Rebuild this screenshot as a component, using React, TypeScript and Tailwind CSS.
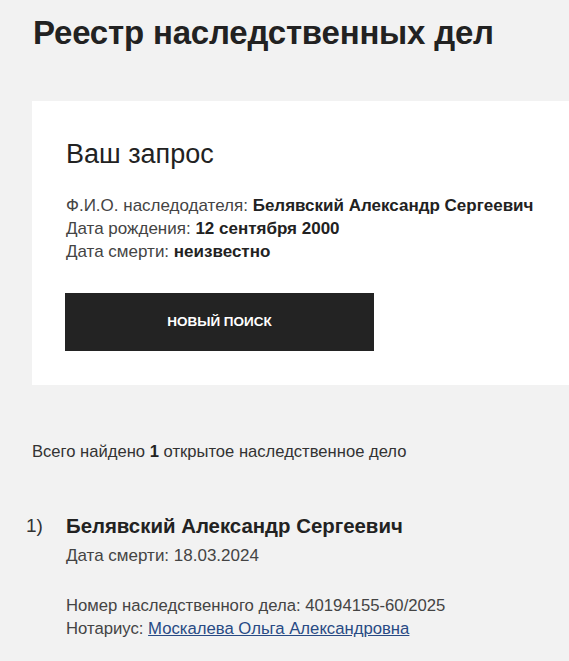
const App = () => {
    return (
        <div className="min-h-screen bg-[#f2f2f2] text-[#222] font-['Liberation_Sans',Arial,sans-serif] pb-6">
            <h1 className="pl-[33px] pt-[14px] text-[33px] leading-[38px] font-bold tracking-[-0.2px]">
                Реестр наследственных дел
            </h1>

            {/* Request card */}
            <div className="ml-8 mt-[49px] bg-white pl-[34px] pt-[38px] pb-[34px]">
                <h2 className="text-[27px] leading-[30px] font-normal">Ваш запрос</h2>
                <div className="mt-[25px] text-[17px] leading-[23px] text-[#444]">
                    <p>
                        Ф.И.О. наследодателя: <b className="text-[#222]">Белявский Александр Сергеевич</b>
                    </p>
                    <p>
                        Дата рождения: <b className="text-[#222]">12 сентября 2000</b>
                    </p>
                    <p>
                        Дата смерти: <b className="text-[#222]">неизвестно</b>
                    </p>
                </div>
                <button
                    type="button"
                    className="mt-[30px] w-[309px] h-[58px] -ml-px bg-[#232323] text-white text-[13.5px] font-bold uppercase"
                >
                    Новый поиск
                </button>
            </div>

            <p className="pl-8 mt-[56px] text-[16.6px] leading-[22px] text-[#333]">
                Всего найдено <b className="text-[#222]">1</b> открытое наследственное дело
            </p>

            {/* Result list */}
            <div className="mt-[50px] flex">
                <span className="w-[66px] pl-[26px] text-[19px] leading-[26px] text-[#333]">1)</span>
                <div>
                    <h3 className="text-[20.4px] leading-[26px] font-bold">Белявский Александр Сергеевич</h3>
                    <p className="mt-[6px] text-[17px] leading-[22px] text-[#444]">Дата смерти: 18.03.2024</p>
                    <div className="mt-[27px] text-[16.7px] leading-[23px] text-[#444]">
                        <p>Номер наследственного дела: 40194155-60/2025</p>
                        <p>
                            Нотариус:{" "}
                            <a href="#" className="text-[#284a84] underline">
                                Москалева Ольга Александровна
                            </a>
                        </p>
                    </div>
                </div>
            </div>
        </div>
    );
};

export default App;
